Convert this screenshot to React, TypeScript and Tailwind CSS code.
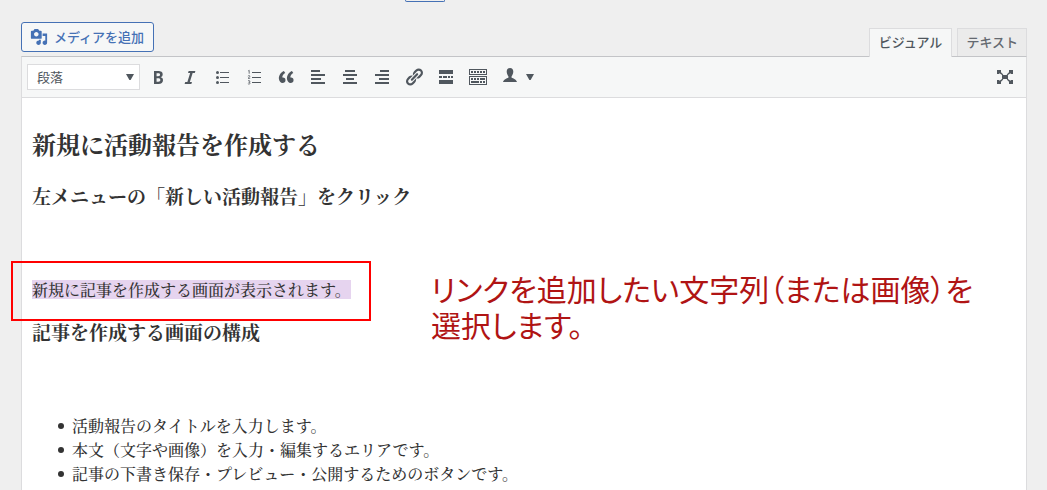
import type { ReactNode } from "react";

function Icon({ children }: { children: ReactNode }) {
  return (
    <svg viewBox="0 0 20 20" className="size-5 fill-current" aria-hidden="true">
      {children}
    </svg>
  );
}

function Caret() {
  return (
    <svg viewBox="0 0 8 6" className="h-1.5 w-2 fill-current" aria-hidden="true">
      <path d="M0 0h8L4.6 6H3.4z" />
    </svg>
  );
}

const tools: { label: string; icon: ReactNode }[] = [
  {
    label: "太字",
    icon: (
      <path d="M6 4v13h4.54c1.37 0 2.46-.33 3.26-1 .8-.66 1.2-1.58 1.2-2.77 0-.84-.17-1.51-.51-2.01s-.9-.85-1.67-1.03v-.09c.57-.1 1.02-.4 1.36-.9s.51-1.13.51-1.91c0-1.14-.39-1.98-1.17-2.5C12.75 4.26 11.5 4 9.78 4H6zm2.57 5.15V6.26h1.36c.73 0 1.27.11 1.61.32.34.22.51.58.51 1.07 0 .54-.16.92-.47 1.15s-.82.35-1.51.35h-1.5zm0 2.19h1.6c1.44 0 2.16.53 2.16 1.61 0 .6-.17 1.05-.51 1.34s-.86.43-1.57.43H8.57v-3.38z" />
    ),
  },
  { label: "イタリック", icon: <path d="M14.78 6h-2.13l-2.8 9h2.12l-.62 2H4.6l.62-2h2.14l2.8-9H8.03l.62-2h6.75z" /> },
  {
    label: "番号なしリスト",
    icon: (
      <>
        <circle cx="5.5" cy="5.5" r="1.5" />
        <circle cx="5.5" cy="10.5" r="1.5" />
        <circle cx="5.5" cy="15.5" r="1.5" />
        <path d="M8 5h9v1H8zM8 10h9v1H8zM8 15h9v1H8z" />
      </>
    ),
  },
  {
    label: "番号付きリスト",
    icon: (
      <>
        <path d="M8 5h9v1H8zM8 10h9v1H8zM8 15h9v1H8z" />
        <path
          className="fill-none stroke-current"
          strokeWidth=".8"
          d="M4.2 4l1-.7v3.4M4 9.2c.3-.9 2-.8 1.9.1 0 .7-1.2 1.2-1.9 2h2.2M4 13.8c.6-.5 1.9-.3 1.9.5 0 .7-.5.9-1.2.9.8 0 1.4.3 1.4 1 0 .9-1.5 1.1-2.2.5"
        />
      </>
    ),
  },
  {
    label: "引用",
    icon: (
      <path d="M9.49 13.22c0-.74-.2-1.38-.61-1.9-.62-.78-1.83-.88-2.53-.72-.29-1.65 1.11-3.75 2.92-4.65L7.88 4c-2.73 1.3-5.42 4.28-4.96 8.05C3.21 14.43 4.59 16 6.54 16c.85 0 1.56-.25 2.12-.75s.83-1.18.83-2.03zm8.05 0c0-.74-.2-1.38-.61-1.9-.63-.78-1.83-.88-2.53-.72-.29-1.65 1.11-3.75 2.92-4.65L15.93 4c-2.73 1.3-5.41 4.28-4.95 8.05.29 2.38 1.66 3.95 3.61 3.95.85 0 1.56-.25 2.12-.75s.83-1.18.83-2.03z" />
    ),
  },
  { label: "左寄せ", icon: <path d="M3 3h9v2H3zM3 7h14v2H3zM3 11h10v2H3zM3 15h14v2H3z" /> },
  { label: "中央揃え", icon: <path d="M5 3h10v2H5zM3 7h14v2H3zM6 11h8v2H6zM3 15h14v2H3z" /> },
  { label: "右寄せ", icon: <path d="M8 3h9v2H8zM3 7h14v2H3zM7 11h10v2H7zM3 15h14v2H3z" /> },
  {
    label: "リンクの挿入",
    icon: (
      <path d="M17.74 2.76c1.68 1.69 1.68 4.41 0 6.1l-1.53 1.52c-1.12 1.12-2.7 1.47-4.14 1.09l2.62-2.61.76-.77.76-.76c.84-.84.84-2.2 0-3.04-.84-.85-2.2-.85-3.04 0l-.77.76-3.38 3.38c-.37-1.44-.02-3.02 1.1-4.14l1.52-1.53c1.69-1.68 4.42-1.68 6.1 0zM8.59 13.43l5.34-5.34c.42-.42.42-1.1 0-1.52-.44-.43-1.13-.39-1.53 0l-5.33 5.34c-.42.42-.42 1.1 0 1.52.44.43 1.13.39 1.52 0zm-.76 2.29l4.14-4.15c.38 1.44.03 3.02-1.09 4.14l-1.52 1.53c-1.69 1.68-4.41 1.68-6.1 0-1.68-1.68-1.68-4.42 0-6.1l1.53-1.52c1.12-1.12 2.7-1.47 4.14-1.1l-4.14 4.15c-.85.84-.85 2.2 0 3.05.84.84 2.2.84 3.04 0z" />
    ),
  },
  { label: "続きを読むタグを挿入", icon: <path d="M3 3h14v4H3zM3 9h3v2H3zM7 9h4v2H7zM12 9h2v2h-2zM15 9h2v2h-2zM3 13h14v4H3z" /> },
  {
    label: "ツールバー切り替え",
    icon: (
      <path
        fillRule="evenodd"
        d="M1 2h18v6H1zM2 3v4h16V3zM1 9h18v9H1zM2 10v7h16v-7zM3 4h2v2H3zM6 4h2v2H6zM9 4h2v2H9zM12 4h2v2h-2zM15 4h2v2h-2zM3 11h2v2H3zM6 11h2v2H6zM9 11h2v2H9zM12 11h5v2h-5zM3 14h8v2H3zM12 14h2v2h-2zM15 14h2v2h-2z"
      />
    ),
  },
];

const items = [
  "活動報告のタイトルを入力します。",
  "本文（文字や画像）を入力・編集するエリアです。",
  "記事の下書き保存・プレビュー・公開するためのボタンです。",
];

function Toolbar() {
  return (
    <div className="flex h-[41px] items-center border-b border-[#dcdcde] bg-[#f6f7f7] pr-[11px] pl-[5px] text-[#50575e]">
      <div className="relative mr-2">
        <select
          aria-label="段落スタイル"
          className="block h-[26px] w-[113px] appearance-none border border-[#dcdcde] bg-white px-[9px] text-[13px] leading-6"
        >
          <option>段落</option>
        </select>
        <span className="pointer-events-none absolute inset-y-0 right-1.5 flex items-center">
          <Caret />
        </span>
      </div>
      <div className="flex gap-3">
        {tools.map((tool) => (
          <button key={tool.label} type="button" aria-label={tool.label}>
            <Icon>{tool.icon}</Icon>
          </button>
        ))}
        <button type="button" aria-label="ユーザー" className="flex items-center gap-1.5">
          <Icon>
            <path d="M10 1c2.2 0 3.3 1.5 3.3 3.6 0 2-1 4-1.7 4.7v1.4c1.8.7 4.9 1.7 5.4 4.3H3c.5-2.6 3.6-3.6 5.400-4.300V9.300C7.700 8.600 6.700 6.600 6.700 4.600 6.700 2.500 7.800 1 10 1z" />
          </Icon>
          <Caret />
        </button>
      </div>
      <button type="button" aria-label="集中執筆モード" className="ml-auto">
        <Icon>
          <path d="M7 8h6v4H7zM2 3h4v2.200L8.300 7.400 7.400 8.300 4.600 6.200 4 7H2zM18 3h-4v2.200l-2.300 2.200.9.900 2.800-2.100.6.800h2zM2 17h4v-2.200l2.300-2.200-.9-.9-2.800 2.100L4 13H2zM18 17h-4v-2.200l-2.300-2.200.9-.9 2.800 2.100.6-.8h2z" />
        </Icon>
      </button>
    </div>
  );
}

export default function App() {
  return (
    <div className="flex min-h-screen flex-col bg-[#efefef] pr-5 pl-[21px] font-['Noto_Sans_CJK_JP',sans-serif] text-[#50575e]">
      <div className="flex h-[22px] items-start pl-96">
        <div className="h-0.5 w-10 rounded-b-[3px] border border-t-0 border-[#4571b5]" />
      </div>
      <div className="flex h-[34px] items-start justify-between">
        <button
          type="button"
          className="flex h-[30px] items-center gap-1.5 rounded-[3px] border border-[#4571b5] bg-[#f6f7f7] pr-[9px] pl-2 text-[13px] font-medium text-[#4571b5]"
        >
          <svg viewBox="0 0 20 20" className="size-[18px] fill-current" aria-hidden="true">
            <path d="M13 11V4c0-.55-.45-1-1-1h-1.67L9 1H5L3.67 3H2c-.55 0-1 .45-1 1v7c0 .55.45 1 1 1h10c.55 0 1-.45 1-1zM7 4.5c1.38 0 2.5 1.12 2.5 2.5S8.38 9.5 7 9.5 4.5 8.38 4.5 7 5.62 4.5 7 4.5zM14 6h5v10.5c0 1.38-1.12 2.5-2.5 2.5S14 17.88 14 16.5s1.12-2.5 2.5-2.5c.17 0 .34.02.5.05V9h-3V6zm-4 8.05V13h2v3.5c0 1.38-1.12 2.5-2.5 2.5S7 17.88 7 16.5 8.12 14 9.5 14c.17 0 .34.02.5.05z" />
          </svg>
          メディアを追加
        </button>
        <div className="z-10 flex gap-[5px] self-end text-[13px] leading-6 font-medium">
          <button type="button" className="-mb-px h-[29px] border border-b-0 border-[#dcdcde] bg-[#f6f7f7] px-[9px] pb-0.5">
            ビジュアル
          </button>
          <button type="button" className="h-7 border border-b-0 border-[#dcdcde] bg-[#ebebeb] px-2 pb-0.5 text-[#646970]">
            テキスト
          </button>
        </div>
      </div>
      <main className="flex flex-1 flex-col border-x border-t border-[#dcdcde] border-t-[#c3c4c7] bg-white">
        <Toolbar />
        <article className="relative px-2.5 pt-7 pb-1 font-['Noto_Serif_CJK_JP','Noto_Serif_JP','Noto_Sans_CJK_JP',serif] text-base leading-6 font-medium text-[#333]">
          <h2 className="text-2xl leading-9 font-bold">新規に活動報告を作成する</h2>
          <h3 className="mt-5 text-[19px] leading-7 font-bold">左メニューの「新しい活動報告」をクリック</h3>
          <p className="my-[22px] h-6" />
          <p>
            <mark className="relative inline-block bg-[#e6d4ef] leading-[19px] text-inherit">
              新規に記事を作成する画面が表示されます。
              <span className="pointer-events-none absolute -top-[19px] -right-5 -bottom-[22px] -left-[21px] border-2 border-[#f00]" />
            </mark>
          </p>
          <h3 className="mt-4 text-[19px] leading-7 font-bold">記事を作成する画面の構成</h3>
          <p className="my-[22px] h-6" />
          <ul className="pl-[26px]">
            {items.map((item) => (
              <li key={item} className="flex items-center gap-2 before:size-1.5 before:rounded-full before:bg-[#333]">
                {item}
              </li>
            ))}
          </ul>
          <p className="absolute top-[172px] left-[409px] font-['Noto_Sans_CJK_JP',sans-serif] text-[30px] leading-9 font-normal whitespace-nowrap text-[#b01414] [font-feature-settings:'palt']">
            リンクを追加したい文字列（または画像）を
            <br />
            選択します。
          </p>
        </article>
      </main>
    </div>
  );
}
